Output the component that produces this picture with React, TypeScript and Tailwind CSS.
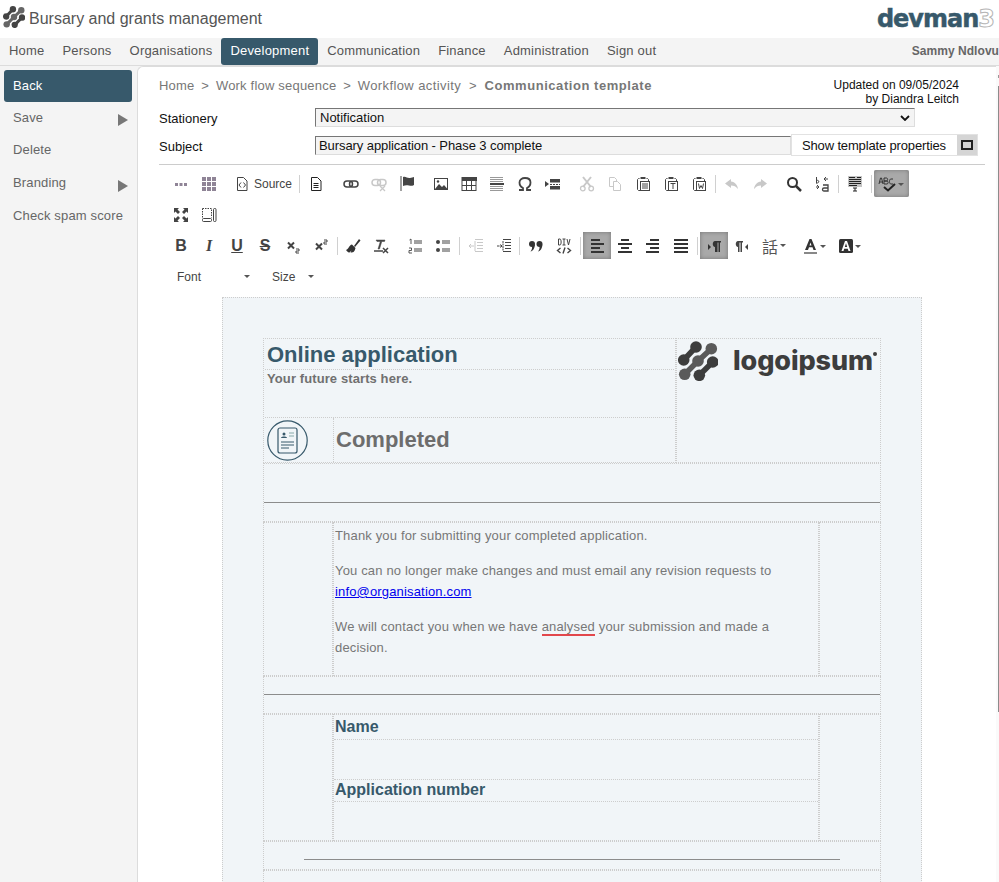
import React from "react";

const G = "#444";
const L = "#c8c8c8";

function Mark({ className, c1 = "#3d3d3d", c2 = "#5a5a5a" }: { className?: string; c1?: string; c2?: string }) {
  const Bell = ({ pts, c }: { pts: number[][]; c: string }) => (
    <g fill={c} stroke={c}>
      <path d={"M" + pts.map((p) => p.join(" ")).join(" L")} strokeWidth="5.5" fill="none" />
      {pts.map((p, i) => (
        <circle key={i} cx={p[0]} cy={p[1]} r="5.8" stroke="none" />
      ))}
    </g>
  );
  return (
    <svg viewBox="0 0 40 40" className={className}>
      <Bell pts={[[33.3, 7.7], [20, 20], [6.7, 33.3]]} c={c2} />
      <Bell pts={[[5.7, 19], [18, 6]]} c={c1} />
      <Bell pts={[[21.3, 34.3], [34.7, 21]]} c={c1} />
    </svg>
  );
}

const I = ({ children, w = 16 }: { children: React.ReactNode; w?: number }) => (
  <svg width={w} height={16} viewBox={`0 0 ${w} 16`} fill="none">{children}</svg>
);

const icons: Record<string, React.ReactNode> = {
  dots: <I><path d="M2 7h3v3H2zM6.500 7h3v3h-3zM11 7h3v3h-3z" fill="#8f8496" /></I>,
  grid: <I><path d="M1 1h4v4H1zM6 1h4v4H6zM11 1h4v4h-4zM1 6h4v4H1zM6 6h4v4H6zM11 6h4v4h-4zM1 11h4v4H1zM6 11h4v4H6zM11 11h4v4h-4z" fill="#8f8496" /></I>,
  source: <I><path d="M3.500 1.500h6l3.500 3.500v9.500h-9.500z" stroke={G} /><path d="M7 6.500 5 9l2 2.500M9.500 6.500l2 2.500-2 2.500" stroke={G} /></I>,
  doc: <I><path d="M3.500 1.500h6l3.500 3.500v9.500h-9.500z" stroke="#222" /><path d="M5.500 7.500h5M5.500 9.500h5M5.500 11.500h5" stroke="#222" /></I>,
  link: <I><rect x="1" y="5" width="8.500" height="6" rx="3" stroke={G} strokeWidth="1.500" /><rect x="6.500" y="5" width="8.500" height="6" rx="3" stroke={G} strokeWidth="1.500" /></I>,
  unlink: <I><rect x="1" y="3.500" width="8.500" height="6" rx="3" stroke={L} strokeWidth="1.500" /><rect x="6.500" y="3.500" width="8.500" height="6" rx="3" stroke={L} strokeWidth="1.500" /><path d="m9 10 5 5m0-5-5 5" stroke={L} strokeWidth="1.300" /></I>,
  flag: <I><path d="M2 0v15" stroke={G} /><path d="M4 1c3-1 4 1.500 7 1 1.500 0 3-1 4-1v8c-2 1-3 1-5 .5C8 9 6 9 4 10z" fill={G} /></I>,
  image: <I><rect x="1.500" y="2.500" width="13" height="11" stroke={G} /><path d="m2 13 4-5 3 3 2-2 3.500 4z" fill={G} /><circle cx="5" cy="5.500" r="1.200" fill={G} /></I>,
  table: <I><rect x="1" y="1.500" width="14" height="13" stroke={G} /><path d="M1 1h15v4H1z" fill={G} /><path d="M1 9.500h14M5.500 5v9M10.500 5v9" stroke={G} /></I>,
  hr: <I><path d="M1 1.500h13M1 3.500h13M1 5.500h13M1 10.500h13M1 12.500h13M1 14.500h13" stroke="#999" /><path d="M1 7h14v2H1z" fill={G} /></I>,
  omega: <I><path d="M2 14h4v-2c-2-1-3.500-3-3.500-5.500C2.500 3.500 5 2 8 2s5.500 1.500 5.500 4.500c0 2.500-1.500 4.500-3.500 5.500v2h4" stroke={G} strokeWidth="1.800" /></I>,
  pagebreak: <I><path d="m0 5 4 3-4 3z" fill={G} /><path d="M5 3h10v3.500H5zM5 10h10v3.500H5z" fill={G} /><path d="M5 8.500h10" stroke={G} strokeDasharray="2 1" /></I>,
  cut: <I><path d="m4 1 8 10M12 1 4 11" stroke={L} strokeWidth="2" /><circle cx="3.800" cy="12.500" r="2.300" stroke={L} strokeWidth="1.300" /><circle cx="12.200" cy="12.500" r="2.300" stroke={L} strokeWidth="1.300" /></I>,
  copy: <I><path d="M2.500 1.500h5l2 2v7h-7z" stroke={L} /><path d="M6.500 5.500h4l3 3v6h-7z" stroke={L} fill="#fff" /></I>,
  paste: <I><path d="M4.500 2.500h-1l-1 1v10l1 1h9.500" stroke={G} /><path d="M5.500 1h5v2h-5z" fill={G} /><path d="M11.500 2.500h1l1 1v2" stroke={G} /><rect x="5.500" y="5.500" width="9" height="9" fill="#fff" stroke={G} /><path d="M7 8h6M7 10h6M7 12h6" stroke={G} /></I>,
  pastet: <I><path d="M4.500 2.500h-1l-1 1v10l1 1h9.500" stroke={G} /><path d="M5.500 1h5v2h-5z" fill={G} /><path d="M11.500 2.500h1l1 1v2" stroke={G} /><rect x="5.500" y="5.500" width="9" height="9" fill="#fff" stroke={G} /><path d="M7.500 7.500h5M10 7.500v5.500" stroke={G} /></I>,
  pastew: <I><path d="M4.500 2.500h-1l-1 1v10l1 1h9.500" stroke={G} /><path d="M5.500 1h5v2h-5z" fill={G} /><path d="M11.500 2.500h1l1 1v2" stroke={G} /><rect x="5.500" y="5.500" width="9" height="9" fill="#fff" stroke={G} /><path d="m7.500 7.500 1 5 1.500-3 1.500 3 1-5" stroke={G} /></I>,
  undo: <I><path d="M7 3 1 7.500 7 12V9.500c3 0 5 1 7 3.500-.5-4-3-7-7-7.500z" fill={L} /></I>,
  redo: <I><path d="m9 3 6 4.500L9 12V9.500c-3 0-5 1-7 3.500.5-4 3-7 7-7.500z" fill={L} /></I>,
  find: <I><circle cx="6.500" cy="6.500" r="4.500" stroke="#333" strokeWidth="2" /><path d="m10 10 5 5" stroke="#333" strokeWidth="2.500" /></I>,
  replace: <I><path d="M2.500 1v6.500M2.500 4.500c3-1 3 3 0 2.500" stroke={G} /><path d="M10 3h4M10 3l2-2M10 3l2 2M2 11h3M5 11l-2-2M5 11l-2 2" stroke={G} /><path d="M9 9h5v6h-4c-2 0-2-3 0-3h4" stroke={G} strokeWidth="1.300" /></I>,
  select: <I><path d="M1 0h14v11H1z" fill="#c4c4c4" /><path d="M2 1.500h6M10 1.500h4M2 3.500h12M2 5.500h12M2 7.500h12M2 9.500h8" stroke="#222" /><path d="M6 12h4M8 12v3M6 15h4" stroke="#222" /></I>,
  spell: <I w={28}><path d="M1 8l1.500-6h1L5 8M2 6h2.500M6 2h2.500c1.500 0 1.500 3 0 3H6zM6 5h3c1.500 0 1.500 3 0 3H6zM15 3h-2c-1 0-1.500 1-1.500 2.500S12 8 13 8h2" stroke="#333" /><path d="m6 11 4 3.500L17 8" stroke="#222" strokeWidth="2" /><path d="M20 7h6l-3 3z" fill="#555" /></I>,
  max: <I><path d="M1 1h5L4.500 2.500 7 5 5 7 2.500 4.500 1 6zM15 1v5l-1.500-1.500L11 7 9 5l2.500-2.500L10 1zM1 15v-5l1.500 1.500L5 9l2 2-2.500 2.500L6 15zM15 15h-5l1.500-1.500L9 11l2-2 2.500 2.500L15 10z" fill={G} /></I>,
  blocks: <I><path d="M1.500 1.500h9v9" stroke={G} strokeDasharray="1.500 1" /><path d="M1.500 1.500v9" stroke={G} strokeDasharray="1.500 1" /><rect x="1.500" y="11.500" width="9" height="3" rx="1" stroke={G} /><rect x="12.500" y="1.500" width="2.500" height="13" rx="1" stroke={G} /></I>,
  sub: <I><path d="m3 4.500 6 6M9 4.500l-6 6" stroke={G} strokeWidth="2" /><path d="M11 11h3v2h-3v2h3" stroke={G} /></I>,
  sup: <I><path d="m3 5.500 6 6M9 5.500l-6 6" stroke={G} strokeWidth="2" /><path d="M11 2h3v2h-3v2h3" stroke={G} /></I>,
  brush: <I><path d="m9 8 5-7 1.500 1.500L10 9z" fill="#333" /><path d="M1 12c3-1 3-5 6-5.500l3.500 3.500c-.5 2-1 3-2 4-1 .5-2.500 .5-3 .5l1-2-2 2c-1 0-2-.5-3.500-2.500z" fill="#333" /></I>,
  clear: <I><path d="M3 2h9l-.5 1.500H8.800L6.500 11H5l2.300-7.500H4z" fill={G} stroke={G} strokeWidth=".5" /><path d="M1 13h9" stroke={G} strokeWidth="1.500" /><path d="m10 10 5 5m0-5-5 5" stroke={G} strokeWidth="1.500" /></I>,
  ol: <I><path d="M2.500 2 4 1v5M2 10h2.500v2.500H2V15h3" stroke={G} strokeWidth=".9" /><path d="M7 3h8M7 5h8M7 11h8M7 13h8" stroke={G} /></I>,
  ul: <I><circle cx="3" cy="4" r="2" fill={G} /><circle cx="3" cy="12" r="2" fill={G} /><path d="M7 3h8M7 5h8M7 11h8M7 13h8" stroke={G} /></I>,
  outdent: <I><path d="M7 1.500h8M9 4.500h6M9 7.500h6M9 10.500h6M7 13.500h8" stroke={L} /><path d="M1 8h5M1 8l2-2M1 8l2 2M7 3v10" stroke={L} /></I>,
  indent: <I><path d="M7 1.500h8M9 4.500h6M9 7.500h6M9 10.500h6M7 13.500h8" stroke={G} /><path d="M1 8h5M6 8 4 6M6 8l-2 2M7 3v10" stroke={G} strokeDasharray="2 .5" /></I>,
  quote: <I><circle cx="4" cy="6" r="3" fill="#333" /><path d="M6.800 6.500C7 10 5 13 2.500 13.500 4 12 4.200 10 4 8.500z" fill="#333" /><circle cx="11.500" cy="6" r="3" fill="#333" /><path d="M14.300 6.500c.2 3.500-1.800 6.500-4.300 7 1.500-1.500 1.700-3.500 1.500-5z" fill="#333" /></I>,
  div: <I><path d="M2.500 1h1.500c1.500 0 1.500 6 0 6H2.500zM8 1v6M6.500 1h3M6.500 7h3M11 1l1.500 6L14 1" stroke={G} /><path d="M4.500 10 1.500 12.500 4.500 15M11.500 10l3 2.500-3 2.500M9 9.500l-2 6" stroke={G} strokeWidth="1.400" /></I>,
  left: <I><path d="M2 1h9v2H2zM2 5h13v2H2zM2 9h9v2H2zM2 13h13v2H2z" fill="#333" /></I>,
  center: <I><path d="M4 1h8v2H4zM1 5h14v2H1zM4 9h8v2H4zM1 13h14v2H1z" fill="#333" /></I>,
  right: <I><path d="M5 1h9v2H5zM1 5h13v2H1zM5 9h9v2H5zM1 13h13v2H1z" fill="#333" /></I>,
  just: <I><path d="M1 1h14v2H1zM1 5h14v2H1zM1 9h14v2H1zM1 13h14v2H1z" fill="#333" /></I>,
  ltr: <I><path d="m2 6 3 3-3 3z" fill="#333" /><path d="M9 3h6v1.500h-1V14h-1.500V4.500h-1V14H9V9c-3 0-3-6 0-6z" fill="#333" /></I>,
  rtl: <I><path d="M3 3h6v1.500H8V14H6.500V4.500h-1V14H4V9C1 9 1 3 4 3z" fill="#444" /><path d="m14 6-3 3 3 3z" fill="#444" /></I>,
  color: <I w={24}><path d="m1 12 4.500-11h2L12 12H9.500l-1-2.700h-3.500l-1 2.700zM5.500 7.500h2L6.500 4.500z" fill="#333" /><path d="M0 14h13v2H0z" fill="#888" /><path d="M16 7h6l-3 3z" fill="#555" /></I>,
  bg: <I w={24}><rect x="0" y="1" width="14" height="14" rx="1.500" fill="#333" /><path d="m2.500 13 3.500-10h2l3.500 10H9.500l-.7-2.200h-3.600l-.7 2.200zM5.800 9h2.400L7 5.300z" fill="#fff" /><path d="M16 7h6l-3 3z" fill="#555" /></I>,
};

const Btn = ({ n, className = "" }: { n: string; className?: string }) => (
  <span className={`flex h-[27px] w-[28px] shrink-0 items-center justify-center ${className}`}>{icons[n]}</span>
);
const Letter = ({ ch, className = "" }: { ch: string; className?: string }) => (
  <span className={`flex h-[27px] w-[28px] shrink-0 items-center justify-center text-[16px] font-bold text-[#444] ${className}`}>{ch}</span>
);
const Sep = ({ className = "" }: { className?: string }) => <span className={`h-[18px] w-px shrink-0 bg-[#d0d0d0] ${className}`} />;
const activeCls = "bg-[#a9a9a9] shadow-[inset_0_0_4px_#777]";

const Caret = () => <span className="h-0 w-0 border-x-[3px] border-t-[3px] border-x-transparent border-t-[#555]" />;

function Toolbar() {
  return (
    <div className="ml-[29px] mt-[5px] flex flex-col gap-[4px]">
      <div className="flex h-[27px] items-center">
        <Btn n="dots" />
        <Btn n="grid" />
        <span className="ml-[6px] flex h-[27px] w-[67px] items-center pl-[5px]">
          {icons.source}
          <span className="ml-[4px] text-[12px] text-[#444]">Source</span>
        </span>
        <Sep className="ml-[3px]" />
        <Btn n="doc" className="ml-[2px]" />
        <Btn n="link" className="ml-[7px]" />
        <Btn n="unlink" />
        <Btn n="flag" />
        <Btn n="image" className="ml-[6px]" />
        <Btn n="table" />
        <Btn n="hr" />
        <Btn n="omega" />
        <Btn n="pagebreak" />
        <Btn n="cut" className="ml-[6px]" />
        <Btn n="copy" />
        <Btn n="paste" />
        <Btn n="pastet" />
        <Btn n="pastew" />
        <Sep className="ml-[2px]" />
        <Btn n="undo" className="ml-[2px]" />
        <Btn n="redo" />
        <Btn n="find" className="ml-[6px]" />
        <Btn n="replace" />
        <Sep className="ml-[2px]" />
        <Btn n="select" className="ml-[2px]" />
        <Sep className="ml-[2px]" />
        <span className={`ml-[2px] flex h-[27px] w-[35px] items-center justify-center rounded-[2px] ${activeCls}`}>{icons.spell}</span>
      </div>
      <div className="flex h-[27px] items-center">
        <Btn n="max" />
        <Btn n="blocks" />
      </div>
      <div className="flex h-[27px] items-center">
        <Letter ch="B" />
        <Letter ch="I" className="font-['Liberation_Serif',serif] italic" />
        <Letter ch="U" className="underline" />
        <Letter ch="S" className="line-through" />
        <Btn n="sub" />
        <Btn n="sup" />
        <Sep className="ml-[2px]" />
        <Btn n="brush" className="ml-[1px]" />
        <Btn n="clear" />
        <Btn n="ol" className="ml-[6px]" />
        <Btn n="ul" />
        <Sep className="ml-[2px]" />
        <Btn n="outdent" className="ml-[2px]" />
        <Btn n="indent" />
        <Sep className="ml-[1px]" />
        <Btn n="quote" className="ml-[2px]" />
        <Btn n="div" />
        <Sep className="ml-[2px]" />
        <Btn n="left" className={`ml-[2px] ${activeCls}`} />
        <Btn n="center" />
        <Btn n="right" />
        <Btn n="just" />
        <Sep className="ml-[2px]" />
        <Btn n="ltr" className={`ml-[2px] ${activeCls}`} />
        <Btn n="rtl" />
        <span className="ml-[6px] flex w-[28px] items-center gap-[2px]">
          <span className="font-['Noto_Sans_CJK_TC',sans-serif] text-[16px] leading-none text-[#555]">話</span>
          <Caret />
        </span>
        <span className="ml-[14px] flex w-[24px] justify-center">{icons.color}</span>
        <span className="ml-[11px] flex w-[24px] justify-center">{icons.bg}</span>
      </div>
      <div className="flex h-[27px] items-center text-[12px] text-[#444]">
        <span className="ml-[10px] w-[67px]">Font</span>
        <Caret />
        <span className="ml-[22px] w-[36px]">Size</span>
        <Caret />
      </div>
    </div>
  );
}

const dot = "border border-dotted border-[#cdcdcd]";
const body = "text-[13px] leading-[21px] tracking-[0.16px] text-[#777]";

function Doc() {
  return (
    <div className={`ml-[84px] mt-[7px] h-[700px] w-[700px] bg-[#f1f5f8] px-[40px] pt-[40px] ${dot}`}>
      <div className="w-[618px]">
        <div className="flex h-[125px]">
          <div className={`w-[413px] ${dot} p-px`}>
            <div className={`h-[30px] ${dot} border-x-0 border-t-0 pl-[2px] text-[22px] font-bold leading-[30px] text-[#37596b]`}>Online application</div>
            <div className={`h-[48px] ${dot} border-x-0 border-t-0 pl-[2px] text-[13px] font-bold leading-[17px] tracking-[0.1px] text-[#707070]`}>Your future starts here.</div>
            <div className="flex h-[44px]">
              <div className={`flex w-[69px] items-center pl-[2px] ${dot} border-y-0 border-l-0`}>
                <svg width="41" height="41" viewBox="0 0 41 41" fill="none" stroke="#37596b">
                  <circle cx="20.500" cy="20.500" r="19.700" strokeWidth="1.200" />
                  <rect x="11" y="8" width="19" height="25" rx="2" strokeWidth="1.200" />
                  <circle cx="17" cy="14" r="1.500" fill="#37596b" stroke="none" />
                  <path d="M14 18c0-2 6-2 6 0z" fill="#37596b" stroke="none" />
                  <path d="M22 13h5M22 16h5" stroke="#8aa" />
                  <path d="M14 22h13M14 25h13M14 28h8" />
                </svg>
              </div>
              <div className="pl-[2px] text-[22px] font-bold leading-[44px] text-[#6d6d6d]">Completed</div>
            </div>
          </div>
          <div className={`flex-1 ${dot} pl-[1px] pt-[1px]`}>
            <div className="flex items-center">
              <Mark className="h-[40px] w-[40px]" />
              <span className="ml-[15px] font-['Inter',sans-serif] text-[27px] font-extrabold leading-[42px] tracking-[-0.1px] text-[#3d3d3d]">logoipsum</span>
              <span className="mb-[14px] h-[4px] w-[4px] shrink-0 rounded-full bg-[#3d3d3d]" />
            </div>
          </div>
        </div>
        <div className={`flex h-[59px] items-center ${dot}`}><div className="mt-[19px] h-px w-full bg-[#8c8c8c]" /></div>
        <div className="flex h-[154px]">
          <div className={`w-[70px] ${dot}`} />
          <div className={`w-[486px] px-[1px] ${dot} ${body}`}>
            <p className="mt-[2px]">Thank you for submitting your completed application.</p>
            <p className="mt-[14px]">You can no longer make changes and must email any revision requests to <a className="text-[#0000ee] underline">info@organisation.com</a></p>
            <p className="mt-[14px]">We will contact you when we have <span className="border-b-2 border-[#e2474c]">analysed</span> your submission and made a decision.</p>
          </div>
          <div className={`flex-1 ${dot}`} />
        </div>
        <div className={`flex h-[38px] items-center ${dot}`}><div className="mb-[1px] h-px w-full bg-[#8c8c8c]" /></div>
        <div className="flex h-[127px]">
          <div className={`w-[70px] ${dot}`} />
          <div className={`w-[486px] ${dot} text-[16px] font-bold text-[#37596b]`}>
            <div className={`h-[25px] pl-[1px] leading-[24px] ${dot} border-x-0 border-t-0`}>Name</div>
            <div className={`h-[40px] ${dot} border-x-0 border-t-0`} />
            <div className={`h-[22px] pl-[1px] leading-[20px] ${dot} border-x-0 border-t-0`}>Application number</div>
          </div>
          <div className={`flex-1 ${dot}`} />
        </div>
        <div className={`flex h-[29px] items-center justify-center ${dot}`}><div className="mt-[8px] h-px w-[536px] bg-[#8c8c8c]" /></div>
        <div className={`h-[20px] ${dot}`} />
      </div>
    </div>
  );
}

export default function App() {
  return (
    <div className="relative h-[882px] w-[999px] overflow-hidden bg-white font-['Liberation_Sans',sans-serif]">
      <header className="flex h-[38px] items-center justify-between">
        <div className="flex items-center">
          <Mark className="mb-[4px] ml-[3px] h-[22px] w-[22px]" c1="#444" c2="#666" />
          <span className="ml-[4px] text-[16px] text-[#555]">Bursary and grants management</span>
        </div>
        <div className="mr-[5px] flex items-baseline font-['DejaVu_Sans',sans-serif] text-[24px] font-bold leading-none tracking-[-1px] text-[#37596b] [-webkit-text-stroke:0.5px_#37596b]">
          devman<span className="text-transparent [-webkit-text-stroke:1px_#b5b5b5]">3</span>
        </div>
      </header>
      <nav className="flex h-[28px] items-center justify-between border-b border-[#dcdcdc] bg-[#f4f4f4] text-[13px] tracking-[0.2px] text-[#555]">
        <div className="flex h-[27px]">
          {["Home", "Persons", "Organisations", "Development", "Communication", "Finance", "Administration", "Sign out"].map((t) =>
            t === "Development" ? (
              <span key={t} className="flex items-center rounded-[3px] bg-[#37596b] px-[9px] pb-[2px] font-normal text-white">{t}</span>
            ) : (
              <span key={t} className="flex items-center px-[9px] pb-[2px]">{t}</span>
            )
          )}
        </div>
        <span className="pb-[2px] text-[12px] font-bold tracking-[0.05px] text-[#666]">Sammy Ndlovu</span>
      </nav>
      <div className="flex h-[817px] bg-[#f4f4f4]">
        <aside className="w-[137px] shrink-0 pt-[4px] text-[13px] tracking-[0.15px] text-[#666]">
          <div className="ml-[4px] mr-[5px] flex h-[32px] items-center rounded-[3px] bg-[#37596b] pb-[1px] pl-[9px] text-white">Back</div>
          <div className="-mt-px">
            {[["Save", true], ["Delete", false], ["Branding", true], ["Check spam score", false]].map(([t, arrow]) => (
              <div key={t as string} className="flex h-[32.7px] items-center justify-between pl-[13px] pr-[9px]">
                <span>{t as string}</span>
                {arrow ? <span className="mt-[6px] h-0 w-0 border-y-[6px] border-l-[10px] border-y-transparent border-l-[#777]" /> : null}
              </div>
            ))}
          </div>
        </aside>
        <main className="min-w-0 flex-1 rounded-tl-[6px] border-l border-t border-[#dcdcdc] bg-white">
          <div className="flex items-start justify-between pl-[21px] pr-[40px] pt-[9px]">
            <div className="text-[13px] tracking-[0.2px] text-[#777]">
              Home <span className="mx-[3px]">&gt;</span> Work flow sequence <span className="mx-[3px]">&gt;</span> <span className="tracking-[0.4px]">Workflow activity</span> <span className="mx-[4px]">&gt;</span> <b className="tracking-[0.55px]">Communication template</b>
            </div>
            <div className="mt-[2px] text-right text-[12px] leading-[14px] text-[#111]">Updated on 09/05/2024<br />by Diandra Leitch</div>
          </div>
          <div className="ml-[21px] mt-[2px] flex h-[19px] items-center text-[13px] text-[#111]">
            <span className="mt-[2px] w-[156px]">Stationery</span>
            <div className="flex h-[19px] w-[600px] items-center justify-between border border-[#ddd] border-l-[#767676] border-t-[#767676] bg-[#f4f4f4] pl-[4px] pr-[4px]">
              <span>Notification</span>
              <svg width="10" height="6" viewBox="0 0 10 6" fill="none"><path d="m1 1 4 4 4-4" stroke="#111" strokeWidth="1.800" /></svg>
            </div>
          </div>
          <div className="ml-[21px] mt-[7px] flex h-[22px] items-center text-[13px] text-[#111]">
            <span className="mt-[4px] w-[156px]">Subject</span>
            <div className="mt-[1px] flex h-[19px] w-[476px] items-center border border-[#ddd] border-l-[#767676] border-t-[#767676] bg-[#f4f4f4] pl-[3px] tracking-[-0.08px]">Bursary application - Phase 3 complete</div>
            <div className="flex h-[22px] w-[187px] items-center justify-between whitespace-nowrap border border-[#e2e2e2] bg-white pl-[10px] tracking-[-0.15px]">
              <span className="pt-[1px]">Show template properties</span>
              <span className="flex h-[20px] w-[20px] items-center justify-center bg-[#d5d5d5]"><span className="h-[10px] w-[12px] border-2 border-[#222]" /></span>
            </div>
          </div>
          <div className="ml-[21px] mr-[14px] mt-[8px] h-px bg-[#ccc]" />
          <Toolbar />
          <Doc />
        </main>
      </div>
      <div className="absolute right-0 top-[66px] h-[816px] w-[3px] bg-[#fafafa]" />
      <div className="absolute right-0 top-[75px] h-[3px] w-px bg-[#999]" />
      <div className="absolute right-0 top-[86px] h-[626px] w-px bg-[#8c8c8c]" />
    </div>
  );
}
